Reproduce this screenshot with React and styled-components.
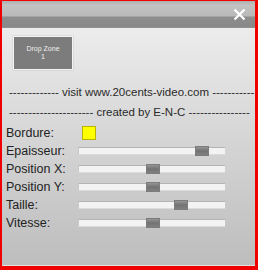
import React from 'react';
import styled, {createGlobalStyle} from 'styled-components';

const Global = createGlobalStyle`
  html, body { margin: 0; padding: 0; background: #fff; }
  body { font-family: "Liberation Sans", Arial, sans-serif; }
`;

const Frame = styled.div`
  width: 258px;
  height: 270px;
  box-sizing: border-box;
  border-style: solid;
  border-color: #f00000;
  border-width: 1px 3px 4px 2px;
  display: flex;
  flex-direction: column;
  overflow: hidden;
`;

const TitleBar = styled.div`
  height: 27px;
  flex: none;
  display: flex;
  justify-content: flex-end;
  align-items: center;
  padding-right: 9px;
  background: linear-gradient(to bottom, #aeaeae 0px, #c2c2c2 4px, #b9b9b9 15px, #8d8d8d 16px, #888 26px, #9a9a9a 27px);
`;

const Body = styled.div`
  flex: 1;
  display: flex;
  flex-direction: column;
  background: linear-gradient(to bottom, #ececec 0%, #d6d6d6 45%, #bdbdbd 100%);
  border-bottom: 1px solid #e0e0e0;
  overflow: hidden;
`;

const DropZone = styled.div`
  margin: 8px 0 0 11px;
  width: 60px;
  height: 34px;
  box-sizing: border-box;
  background: #7c7c7c;
  border: 1px solid #f4f4f4;
  box-shadow: 0 0 1px #999;
  color: #f0f0f0;
  font-size: 7px;
  line-height: 8px;
  text-align: center;
  display: flex;
  flex-direction: column;
  justify-content: center;
`;

const Spacer = styled.div`
  height: 12px;
`;

const Line = styled.div`
  white-space: nowrap;
  padding-left: 7px;
  font-size: 11.5px;
  color: #2a2a2a;
  height: 20px;
  line-height: 20px;
  overflow: hidden;
`;

const Rows = styled.div`
  display: flex;
  flex-direction: column;
  padding-left: 4px;
  margin-top: 2px;
`;

const Row = styled.div`
  display: flex;
  align-items: center;
  height: 18px;
`;

const Label = styled.div`
  width: 72px;
  font-size: 12.5px;
  color: #222;
`;

const Swatch = styled.div`
  width: 12px;
  height: 12px;
  margin-left: 4px;
  background: #ffff00;
  border: 1px solid #b8b400;
`;

const Track = styled.div`
  position: relative;
  width: 147px;
  height: 8px;
  box-sizing: border-box;
  background: #f3f3f3;
  border-top: 1px solid #b4b4b4;
  border-left: 1px solid #c8c8c8;
  border-bottom: 1px solid #dcdcdc;
`;

const Thumb = styled.div`
  position: absolute;
  top: -2px;
  width: 14px;
  height: 10px;
  box-sizing: border-box;
  background: linear-gradient(to bottom, #959595, #727272 50%, #808080);
  border: 1px solid #7c7c7c;
`;

const sliders = [
  {label: 'Epaisseur:', pos: 116},
  {label: 'Position X:', pos: 67},
  {label: 'Position Y:', pos: 67},
  {label: 'Taille:', pos: 95},
  {label: 'Vitesse:', pos: 67},
];

export default function App() {
  return (
    <Frame>
      <Global />
      <TitleBar>
        <svg width="13" height="13" viewBox="0 0 13 13">
          <path d="M1.5 1.5 L11.5 11.5 M11.5 1.5 L1.5 11.5" stroke="#fff" strokeWidth="2.2" />
        </svg>
      </TitleBar>
      <Body>
        <DropZone>
          <span>Drop Zone</span>
          <span>1</span>
        </DropZone>
        <Spacer />
        <Line>------------- visit www.20cents-video.com -----------</Line>
        <Line>---------------------- created by E-N-C ----------------</Line>
        <Rows>
          <Row>
            <Label>Bordure:</Label>
            <Swatch />
          </Row>
          {sliders.map((s) => (
            <Row key={s.label}>
              <Label>{s.label}</Label>
              <Track>
                <Thumb style={{left: s.pos}} />
              </Track>
            </Row>
          ))}
        </Rows>
      </Body>
    </Frame>
  );
}
